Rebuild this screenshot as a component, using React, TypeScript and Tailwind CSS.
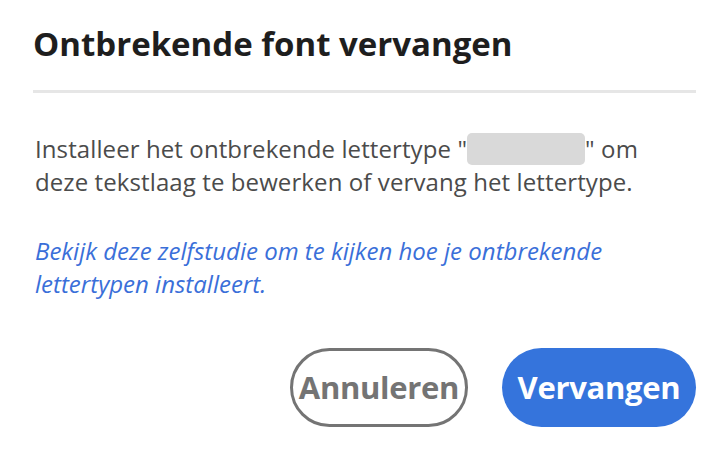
import React from "react";

export default function App() {
  return (
    <div className="w-[714px] h-[460px] bg-white flex flex-col pl-[33px] pr-[18px] font-['Open_Sans',sans-serif] overflow-hidden">
      <h1 className="mt-[24px] h-[40px] leading-[40px] text-[33px] font-bold text-[#1e1e1e]">
        Ontbrekende font vervangen
      </h1>
      <div className="mt-[26px] h-[3px] bg-[#e6e6e6]" />
      <p className="mt-[39px] text-[24px] leading-[33px] text-[#4b4b4b] pl-[2px] tracking-[0.1px]">
        Installeer het ontbrekende lettertype "
        <span className="inline-block align-[-7px] w-[118px] h-[32px] rounded-[5px] bg-[#d9d9d9]" />
        " om
        <br />
        deze tekstlaag te bewerken of vervang het lettertype.
      </p>
      <p className="mt-[36px] text-[24px] leading-[33px] italic text-[#3a6fd9] pl-[2px]">
        Bekijk deze zelfstudie om te kijken hoe je ontbrekende
        <br />
        lettertypen installeert.
      </p>
      <div className="mt-auto mb-[33px] flex justify-end gap-[34px]">
        <button className="w-[178px] h-[79px] rounded-full border-[3px] border-[#747474] text-[#747474] text-[31px] font-bold tracking-[-0.3px] bg-white">
          Annuleren
        </button>
        <button className="w-[194px] h-[79px] rounded-full bg-[#3574dc] text-white text-[31px] font-bold tracking-[-0.3px]">
          Vervangen
        </button>
      </div>
    </div>
  );
}
